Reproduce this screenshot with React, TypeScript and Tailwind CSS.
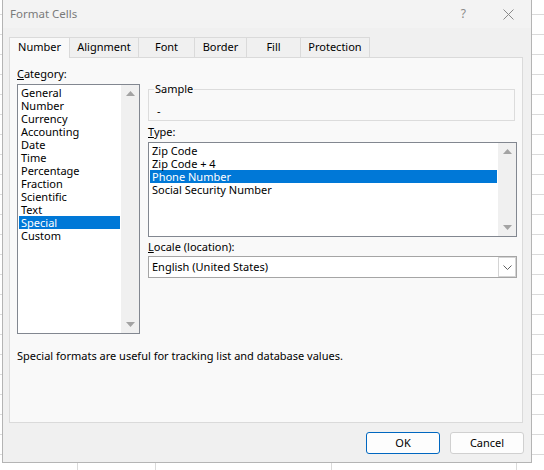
import React from "react";

const categories = [
  "General",
  "Number",
  "Currency",
  "Accounting",
  "Date",
  "Time",
  "Percentage",
  "Fraction",
  "Scientific",
  "Text",
  "Special",
  "Custom",
];

const types = ["Zip Code", "Zip Code + 4", "Phone Number", "Social Security Number"];

const tabs = [
  { name: "Number", w: "w-[60px]" },
  { name: "Alignment", w: "w-[69px]" },
  { name: "Font", w: "w-[56px]" },
  { name: "Border", w: "w-[52px]" },
  { name: "Fill", w: "w-[54px]" },
  { name: "Protection", w: "w-[70px]" },
];

function Arrow({ down }: { down?: boolean }) {
  return (
    <svg width="9" height="5" viewBox="0 0 9 5">
      {down ? <polygon points="0,0 9,0 4.5,5" fill="#a3a3a3" /> : <polygon points="4.5,0 9,5 0,5" fill="#a3a3a3" />}
    </svg>
  );
}

function ScrollBar() {
  return (
    <div className="flex w-[18px] flex-col justify-between bg-[#f0f0f0]">
      <div className="flex h-[17px] items-center justify-center">
        <Arrow />
      </div>
      <div className="flex h-[17px] items-center justify-center">
        <Arrow down />
      </div>
    </div>
  );
}

function ListBox({ items, selected, className }: { items: string[]; selected: string; className: string }) {
  return (
    <div className={`flex border border-[#828790] bg-white ${className}`}>
      <div className="flex-1 p-[1px]">
        {items.map((item) => (
          <div
            key={item}
            className={`h-[13px] px-[2px] leading-[13px] whitespace-nowrap ${
              item === selected ? "bg-[#0078d7] text-white" : "text-black"
            }`}
          >
            {item}
          </div>
        ))}
      </div>
      <ScrollBar />
    </div>
  );
}

export default function App() {
  return (
    <div
      className="h-[470px] w-[544px] overflow-hidden bg-white bg-[linear-gradient(to_bottom,transparent_14px,#dadada_14px,#dadada_15px,transparent_15px)] bg-[length:100%_20px] text-[11px] text-black"
      style={{ fontFamily: '"Noto Sans", "Liberation Sans", sans-serif' }}
    >
      <div className="ml-[2px] flex h-[463px] w-[530px] flex-col border-x border-b border-[#b4b4b4] bg-[#f0f0f0]">
        {/* title bar */}
        <div className="flex h-[28px] items-center bg-[#f3f3f3] pl-[7px]">
          <span className="text-[11.5px] text-[#7a7a7a]">Format Cells</span>
          <span className="ml-auto mr-[37px] text-[12px] text-[#8a8a8a]">?</span>
          <svg className="mr-[17px]" width="11" height="11" viewBox="0 0 11 11">
            <path d="M0.5 0.5 L10.5 10.5 M10.5 0.5 L0.5 10.5" stroke="#8a8a8a" strokeWidth="1" />
          </svg>
        </div>

        {/* tabs */}
        <div className="ml-[6px] mt-[9px] flex h-[20px] items-start">
          {tabs.map((t, i) => (
            <div
              key={t.name}
              className={`${t.w} flex items-center justify-center border-t border-l border-[#dadada] ${
                i === tabs.length - 1 ? "border-r" : ""
              } ${i === 0 ? "relative z-10 h-[21px] bg-[#f9f9f9] pb-[1px]" : "h-[20px] bg-[#f0f0f0]"}`}
            >
              {t.name}
            </div>
          ))}
        </div>

        {/* panel */}
        <div className="ml-[6px] h-[366px] w-[514px] border border-[#dadada] bg-[#f9f9f9]">
          <div className="flex pl-[7px] pt-[8px]">
            <div className="w-[123px]">
              <div className="leading-[16px]">
                <span className="underline">C</span>ategory:
              </div>
              <ListBox items={categories} selected="Special" className="mt-[2px] h-[250px]" />
            </div>

            <div className="ml-[8px] w-[369px]">
              <div className="relative mt-[23px] h-[32px] w-[367px] border border-[#dcdcdc]">
                <span className="absolute -top-[9px] left-[5px] bg-[#f9f9f9] px-[1px] leading-[16px]">Sample</span>
                <div className="pl-[8px] pt-[13px] leading-[16px]">-</div>
              </div>

              <div className="mt-[3px] leading-[16px]">
                <span className="underline">T</span>ype:
              </div>
              <ListBox items={types} selected="Phone Number" className="mt-[2px] h-[95px]" />

              <div className="mt-[2px] leading-[16px]">
                <span className="underline">L</span>ocale (location):
              </div>
              <div className="mt-[1px] flex h-[22px] items-center border border-[#a5a5a5] bg-white pl-[3px]">
                <span className="flex-1">English (United States)</span>
                <div className="flex h-[20px] w-[18px] items-center justify-center border border-[#d4d4d4] bg-white">
                  <svg width="9" height="5" viewBox="0 0 9 5">
                    <path d="M0.5 0.5 L4.5 4.5 L8.5 0.5" fill="none" stroke="#606060" strokeWidth="1" />
                  </svg>
                </div>
              </div>
            </div>
          </div>

          <p className="mt-[14px] pl-[7px] leading-[16px]">
            Special formats are useful for tracking list and database values.
          </p>
        </div>

        {/* buttons */}
        <div className="mt-[9px] flex justify-end gap-[10px] pr-[7px]">
          <button className="h-[22px] w-[74px] rounded-[3px] border border-[#0067c0] bg-[#fdfdfd]">OK</button>
          <button className="h-[22px] w-[74px] rounded-[3px] border border-[#d0d0d0] bg-[#fdfdfd]">Cancel</button>
        </div>
      </div>

      {/* spreadsheet below the dialog */}
      <div className="flex h-[7px]">
        <div className="w-[78px] border-r border-[#dadada]" />
        <div className="w-[78px] border-r border-[#dadada]" />
        <div className="w-[176px] border-r border-[#dadada]" />
        <div className="w-[185px] border-r border-[#dadada]" />
      </div>
    </div>
  );
}
